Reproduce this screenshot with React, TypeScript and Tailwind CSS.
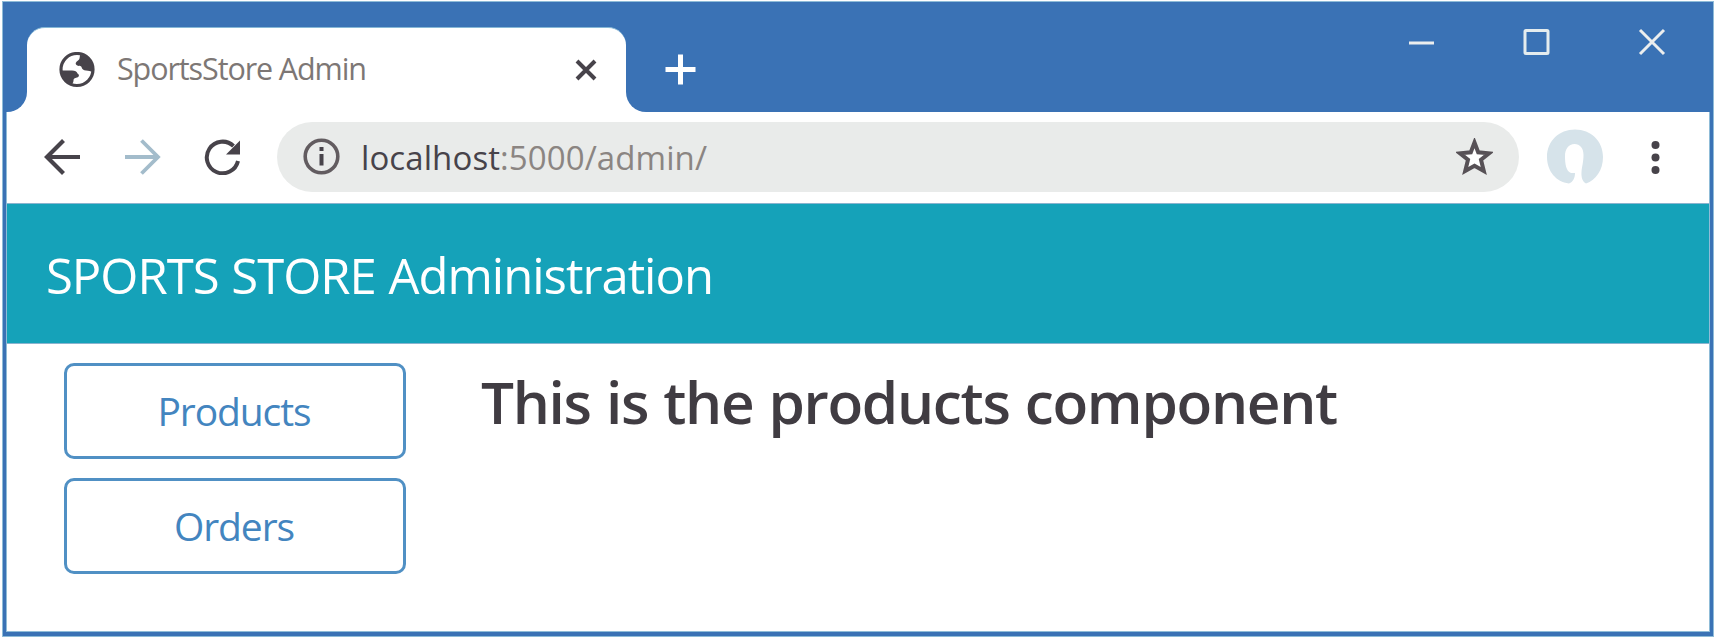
import type { ReactNode } from "react";

const INK = "#47434a";

function TitleBar() {
  return (
    <header className="flex h-[107px] shrink-0 items-end bg-[#3a72b5]">
      <div className="h-5 w-[21px] bg-white">
        <div className="h-full w-full rounded-br-[20px] bg-[#3a72b5]" />
      </div>
      <div className="flex h-[85px] w-[599px] items-center rounded-t-[18px] border-t border-[#86b8d6] bg-white pr-[29px] pl-[32px]">
        <svg className="h-9 w-9 shrink-0" viewBox="0 0 36 36" fill="none">
          <circle cx="18" cy="17.500" r="16" stroke={INK} strokeWidth="3.2" />
          <path
            d="M21 3C20.500 6 21 7 19 8.500C16.500 10.500 16 11.500 17.500 13C19.500 14.500 22 13.500 22.500 15C23 17 24.500 18.500 27 18.500C30 18.500 31 19.500 34 20C35 10 29 3 21 3Z"
            fill={INK}
          />
          <path
            d="M2 18.500H13C16 18.500 18 19.500 18.500 21.500C20.500 22.500 20.500 25 18 25.500C15.500 26 14.500 26.500 14.500 28.500C14.500 31 13 31 13 33C6 30.500 2 25 2 18.500Z"
            fill={INK}
          />
        </svg>
        <span className="ml-[22px] pb-1 text-[30.5px] leading-[40px] tracking-[-1.1px] whitespace-nowrap text-[#7d7775]">
          SportsStore Admin
        </span>
        <svg className="ml-auto h-[22px] w-[22px] shrink-0" viewBox="0 0 22 22" fill="none">
          <path d="M2 2L20 20M20 2L2 20" stroke={INK} strokeWidth="4" />
        </svg>
      </div>
      <div className="h-5 w-5 bg-white">
        <div className="h-full w-full rounded-bl-[20px] bg-[#3a72b5]" />
      </div>
      <div className="flex h-[85px] flex-1 items-center pl-[19px]">
        <svg className="h-[31px] w-[31px]" viewBox="0 0 31 31" fill="none">
          <path d="M15.500 0.500V30.500M0.500 15.500H30.500" stroke="#fff" strokeWidth="5" />
        </svg>
      </div>
      <div className="flex h-full gap-[88px] pt-[23px] pr-[44px]">
        <svg className="h-7 w-7" viewBox="0 0 28 28" fill="none">
          <path d="M3 15H28" stroke="#eceeee" strokeWidth="3" />
        </svg>
        <svg className="h-7 w-7" viewBox="0 0 28 28" fill="none">
          <rect x="3" y="2.500" width="23" height="23" rx="1" stroke="#e4ecee" strokeWidth="3" />
        </svg>
        <svg className="h-7 w-7" viewBox="0 0 28 28" fill="none">
          <path d="M2 2L26 26M26 2L2 26" stroke="#eceeee" strokeWidth="3" />
        </svg>
      </div>
    </header>
  );
}

function Toolbar() {
  return (
    <div className="flex h-[91px] shrink-0 items-center bg-white pb-[2px] pl-[37px]">
      <svg className="h-9 w-9" viewBox="0 0 36 36" fill="none">
        <path d="M36 18H4M19.500 1.500L3 18L19.500 34.500" stroke={INK} strokeWidth="4.200" />
      </svg>
      <svg className="ml-[45px] h-9 w-9" viewBox="0 0 36 36" fill="none">
        <path d="M0 18H32M16.500 1.500L33 18L16.500 34.500" stroke="#a3bccb" strokeWidth="3.800" />
      </svg>
      <svg className="ml-[43px] h-9 w-9" viewBox="0 0 36 36" fill="none">
        <path d="M34 22A15.800 15.800 0 1 1 29.500 7" stroke={INK} strokeWidth="4" />
        <path d="M36 1.500V15.500H22Z" fill={INK} />
      </svg>
      <div className="ml-[37px] flex h-[70px] w-[1242px] items-center rounded-full bg-[#e9ebea] px-[26px]">
        <svg className="h-[37px] w-[37px]" viewBox="0 0 37 37" fill="none">
          <circle cx="18.500" cy="18.500" r="16.300" stroke="#625c60" strokeWidth="3.600" />
          <path d="M18.500 16V27.500M18.500 9V13" stroke={INK} strokeWidth="4" />
        </svg>
        <span className="ml-[21px] pt-[2px] text-[33px] leading-[44px] tracking-[0.09px] whitespace-nowrap text-[#8b8582]">
          <span className="text-[#47434a]">localhost</span>:5000/admin/
        </span>
        <svg className="ml-auto h-[37px] w-[37px]" viewBox="0 0 37 37" fill="none">
          <path
            d="M18.500 4.500L22.200 14.300L33 15.300L25 21.800L27.800 33L18.500 27.800L9.200 33L12 21.800L4 15.300L14.800 14.300Z"
            fill="#fff"
            stroke="#575156"
            strokeWidth="4"
          />
        </svg>
      </div>
      <svg className="ml-[28px] h-[56px] w-[56px]" viewBox="0 0 56 56">
        <path
          d="M22 54.500C9 53 0 42 0 28C0 12 12 0.500 28 0.500C44 0.500 56 12 56 28C56 41 49 51 39 54.500C36 53 34 49 34.500 43C35 37 36.500 33 36.500 26C36.500 19 33 15 27.500 15C21.500 15 18 20 18 27C18 35 19 42 24 44H28C28 49 26 53 22 54.500Z"
          fill="#d6e3ea"
        />
      </svg>
      <svg className="ml-[48px] h-[36px] w-[9px]" viewBox="0 0 9 36" fill={INK}>
        <circle cx="4.500" cy="6" r="4" />
        <circle cx="4.500" cy="18.500" r="4" />
        <circle cx="4.500" cy="31" r="4" />
      </svg>
    </div>
  );
}

function NavButton({ children }: { children: ReactNode }) {
  return (
    <button className="flex h-[96px] w-[342px] items-center justify-center rounded-[10px] border-[3px] border-[#5090c4] pr-[2px] text-[39px] leading-[52px] tracking-[-1.1px] text-[#4385bf]">
      {children}
    </button>
  );
}

export default function App() {
  return (
    <div className="h-[638px] w-[1716px] overflow-hidden bg-white pt-px pl-[2px] font-['Open_Sans','Noto_Sans',sans-serif]">
      <div className="h-[636px] w-[1712px] border border-[#8fbcd8]">
        <div className="flex h-full flex-col border-[3px] border-b-4 border-[#3a72b5]">
          <TitleBar />
          <div className="flex flex-1 flex-col border-x border-b border-[#8fbcd8]">
            <Toolbar />
            <div className="flex h-[141px] shrink-0 items-center border-t border-b border-[#8ab4cf] bg-[#15a2b9] pt-[3px] pl-[39px] text-[49px] leading-[64px] tracking-[-1px] [word-spacing:1px] text-white">
              SPORTS STORE Administration
            </div>
            <main className="flex pt-[19px] pl-[57px]">
              <nav className="flex flex-col gap-[19px]">
                <NavButton>Products</NavButton>
                <NavButton>Orders</NavButton>
              </nav>
              <h1 className="ml-[75px] pt-px text-[58.5px] leading-[74px] font-semibold tracking-[-1.3px] [word-spacing:1.2px] text-[#403c42]">
                This is the products component
              </h1>
            </main>
          </div>
        </div>
      </div>
    </div>
  );
}
